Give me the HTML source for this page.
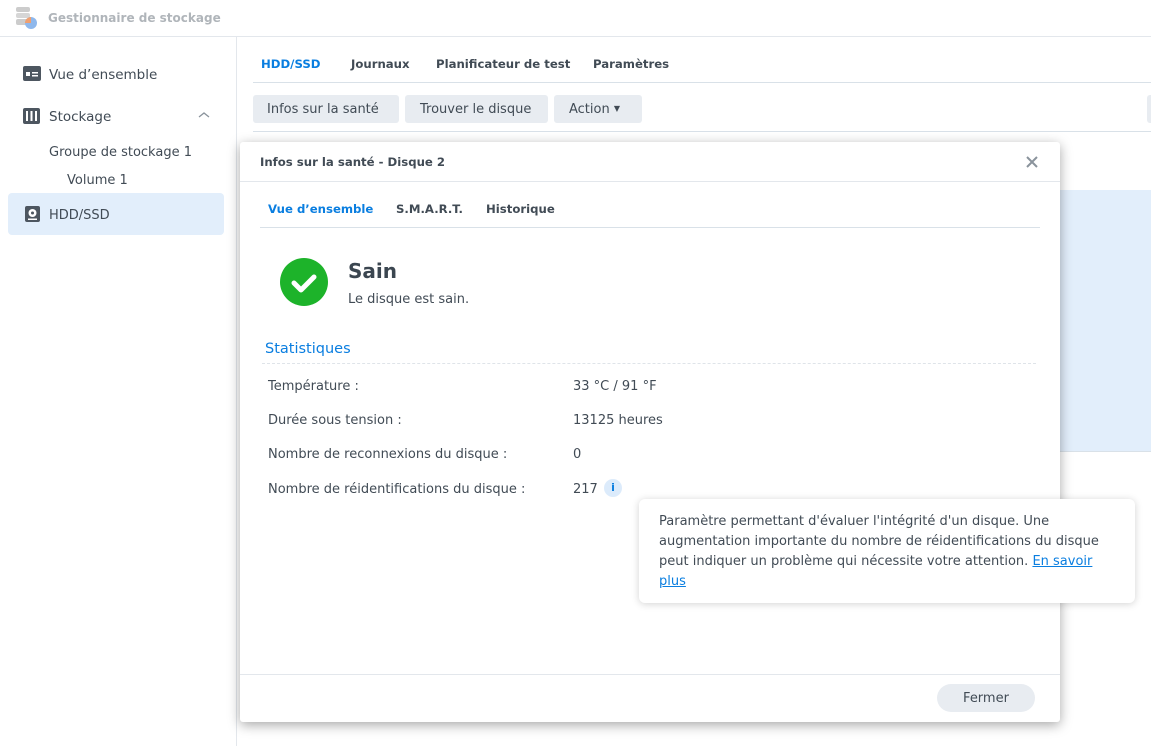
<!DOCTYPE html>
<html><head><meta charset="utf-8"><style>
*{box-sizing:border-box;margin:0;padding:0}
body{width:1151px;height:746px;overflow:hidden;background:#fff;font-family:"DejaVu Sans","Liberation Sans",sans-serif;font-size:13px;color:#414b55;position:relative}
.a{position:absolute}
.b{font-weight:bold;font-size:11.7px}
</style></head><body>
<div class="a" style="left:0;top:0;width:1151px;height:37px;border-bottom:1px solid #e3e7ec"></div>
<svg class="a" style="left:14px;top:6px" width="24" height="24"><rect x="2" y="1" width="14" height="5" rx="2" fill="#ccc"/><rect x="2" y="7" width="14" height="5" rx="2" fill="#d6d6d6"/><rect x="2" y="13" width="14" height="6" rx="2" fill="#ccc"/><circle cx="17" cy="17" r="6" fill="#8fb8ec"/><path d="M17 17V11a6 6 0 0 0-6 6z" fill="#f0a070"/></svg>
<div class="a b" style="left:48px;top:11px;color:#b0b5ba;font-size:12px">Gestionnaire de stockage</div>
<div class="a" style="left:236px;top:37px;width:1px;height:709px;background:#e3e7ec"></div>
<svg class="a" style="left:23px;top:66px" width="18" height="16"><rect x="0" y="0" width="18" height="15" rx="2" fill="#4d5660"/><rect x="3" y="6" width="4" height="4" fill="#fff"/><rect x="9" y="6" width="6" height="1.5" fill="#fff"/><rect x="9" y="9" width="6" height="1.5" fill="#fff"/></svg>
<div class="a" style="left:49px;top:67px;font-size:13.5px">Vue d’ensemble</div>
<svg class="a" style="left:23px;top:108px" width="18" height="16"><rect x="0" y="0" width="17" height="16" rx="2" fill="#4d5660"/><rect x="3" y="3" width="2" height="10" fill="#fff"/><rect x="7.5" y="3" width="2" height="10" fill="#fff"/><rect x="12" y="3" width="2" height="10" fill="#fff"/></svg>
<div class="a" style="left:49px;top:109px;font-size:13.5px">Stockage</div>
<svg class="a" style="left:198px;top:111px" width="12" height="8"><path d="M1 6l5-4 5 4" stroke="#8a939c" fill="none" stroke-width="1.3"/></svg>
<div class="a" style="left:49px;top:145px">Groupe de stockage 1</div>
<div class="a" style="left:67px;top:173px">Volume 1</div>
<div class="a" style="left:8px;top:193px;width:216px;height:42px;background:#e2eefb;border-radius:4px"></div>
<svg class="a" style="left:25px;top:206px" width="15" height="16"><rect x="0" y="0" width="15" height="16" rx="2" fill="#4d5660"/><circle cx="7.5" cy="7" r="4" fill="#fff"/><circle cx="7.5" cy="7" r="1.5" fill="#4d5660"/><rect x="3" y="12.5" width="9" height="1.5" fill="#fff"/></svg>
<div class="a" style="left:49px;top:208px">HDD/SSD</div>
<div class="a b" style="left:261px;top:57px;color:#0a7ee0">HDD/SSD</div>
<div class="a b" style="left:351px;top:57px">Journaux</div>
<div class="a b" style="left:436px;top:57px">Planificateur de test</div>
<div class="a b" style="left:593px;top:57px">Paramètres</div>
<div class="a" style="left:253px;top:82px;width:898px;height:1px;background:#d9e1e8"></div>
<div class="a" style="left:253px;top:95px;width:146px;height:28px;background:#e8ecf1;border-radius:3px;padding:7px 0 0 14px">Infos sur la santé</div>
<div class="a" style="left:405px;top:95px;width:143px;height:28px;background:#e8ecf1;border-radius:3px;padding:7px 0 0 15px">Trouver le disque</div>
<div class="a" style="left:554px;top:95px;width:88px;height:28px;background:#e8ecf1;border-radius:3px;padding:7px 0 0 15px">Action <span style="font-size:8px;vertical-align:2px">▼</span></div>
<div class="a" style="left:1147px;top:95px;width:10px;height:28px;background:#e8ecf1;border-radius:3px"></div>
<div class="a" style="left:253px;top:131px;width:898px;height:1px;background:#d9e1e8"></div>
<div class="a" style="left:1060px;top:190px;width:91px;height:261px;background:#e2eefb"></div>
<div class="a" style="left:1060px;top:451px;width:91px;height:1px;background:#d9e1e8"></div>
<div class="a" style="left:240px;top:142px;width:820px;height:580px;background:#fff;border-radius:3px;box-shadow:0 3px 12px rgba(0,0,0,.35)"></div>
<div class="a b" style="left:260px;top:155px">Infos sur la santé - Disque 2</div>
<svg class="a" style="left:1026px;top:156px" width="12" height="12"><path d="M1 1l10 10M11 1L1 11" stroke="#8a939c" stroke-width="2"/></svg>
<div class="a" style="left:240px;top:181px;width:820px;height:1px;background:#e3e7ec"></div>
<div class="a b" style="left:268px;top:202px;color:#0a7ee0">Vue d’ensemble</div>
<div class="a b" style="left:396px;top:202px">S.M.A.R.T.</div>
<div class="a b" style="left:486px;top:202px">Historique</div>
<div class="a" style="left:260px;top:227px;width:780px;height:1px;background:#d9e1e8"></div>
<svg class="a" style="left:280px;top:258px" width="48" height="48"><circle cx="24" cy="24" r="24" fill="#1db32a"/><path d="M14 25l7 7 13-13" stroke="#fff" stroke-width="5" fill="none" stroke-linecap="round" stroke-linejoin="round"/></svg>
<div class="a" style="left:348px;top:259px;font-size:20px;font-weight:bold;color:#3b4650">Sain</div>
<div class="a" style="left:348px;top:292px">Le disque est sain.</div>
<div class="a" style="left:265px;top:341px;font-size:14.5px;color:#0a7ee0">Statistiques</div>
<div class="a" style="left:262px;top:363px;width:774px;border-top:1px dashed #dfe4e9"></div>
<div class="a" style="left:268px;top:379px">Température :</div><div class="a" style="left:573px;top:379px">33 °C / 91 °F</div>
<div class="a" style="left:268px;top:413px">Durée sous tension :</div><div class="a" style="left:573px;top:413px">13125 heures</div>
<div class="a" style="left:268px;top:447px">Nombre de reconnexions du disque :</div><div class="a" style="left:573px;top:447px">0</div>
<div class="a" style="left:268px;top:482px">Nombre de réidentifications du disque :</div><div class="a" style="left:573px;top:482px">217</div>
<div class="a" style="left:604px;top:479px;width:18px;height:18px;border-radius:9px;background:#dcebfb;color:#0a7ee0;font-size:11px;font-weight:bold;text-align:center;line-height:18px">i</div>
<div class="a" style="left:240px;top:674px;width:820px;height:1px;background:#e3e7ec"></div>
<div class="a" style="left:937px;top:684px;width:98px;height:28px;background:#e8ecf1;border-radius:14px;text-align:center;line-height:29px">Fermer</div>
<div class="a" style="left:639px;top:499px;width:496px;height:104px;background:#fff;border-radius:6px;box-shadow:0 1px 8px rgba(0,0,0,.18);padding:13px 20px;line-height:20px">Paramètre permettant d'évaluer l'intégrité d'un disque. Une augmentation importante du nombre de réidentifications du disque peut indiquer un problème qui nécessite votre attention. <span style="color:#0a7ee0;text-decoration:underline">En savoir plus</span></div>
</body></html>
